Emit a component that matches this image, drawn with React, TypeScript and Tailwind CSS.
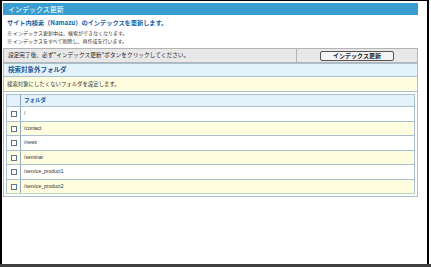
const folders = ['/', '/contact', '/news', '/seminar', '/service_product1', '/service_product2'];

export default function App() {
  return (
    <div className="w-[431px] h-[268px] bg-white flex flex-col font-['Noto_Sans_CJK_JP',sans-serif] text-[#333]">
      <div className="w-[429px] flex-1 border-l-2 border-t border-r-2 border-black pl-px pt-[2px]">
        <div className="w-[415px]">
          {/* title bar */}
          <div className="h-[12px] bg-[#3a9dd0] text-white text-[7px] leading-[12px] pl-[5px]">
            インデックス更新
          </div>

          <div className="mt-[4px] pl-[4px] text-[6.2px] leading-[8px] font-bold text-[#0d5fa8]">
            サイト内検索（Namazu）のインデックスを更新します。
          </div>
          <div className="mt-[2px] pl-[4px] text-[5px] leading-[8px]">
            <div>※ インデックス更新中は、検索ができなくなります。</div>
            <div>※ インデックスをすべて削除し、再作成を行います。</div>
          </div>

          {/* action bar */}
          <div className="mt-[3px] h-[15px] flex border border-[#b4b4b4] bg-[#e8e8e8]">
            <div className="w-[293px] border-r border-[#b4b4b4] flex items-center pl-[4px] text-[5.7px] text-[#222]">
              設定完了後、必ず”インデックス更新”ボタンをクリックしてください。
            </div>
            <div className="flex-1 flex items-center justify-center">
              <button className="w-[74px] h-[10px] border border-[#555] rounded-[2px] bg-[#f4f4f4] text-[6px] leading-[8px] font-bold text-[#222]">
                インデックス更新
              </button>
            </div>
          </div>

          {/* excluded folders */}
          <div className="border border-[#a9c0cf]">
            <div className="h-[13px] bg-[#e4f2fb] border-b border-[#a9c0cf] flex items-center pl-[4px] text-[6.5px] font-bold text-[#1a5a9a]">
              検索対象外フォルダ
            </div>
            <div className="h-[15px] bg-[#fffde0] border-b border-[#a9c0cf] flex items-center pl-[3px] text-[5.4px]">
              検索対象にしたくないフォルダを設定します。
            </div>
            <div className="p-[2px]">
              <div className="border border-[#a9c0cf] border-b-[#b8d8b8]">
                <div className="h-[11px] flex bg-[#e4f2fb]">
                  <div className="w-[14px] border-r border-[#8fa8b8]" />
                  <div className="flex items-center pl-[3px] text-[5.5px] font-bold text-[#1a5a9a]">フォルダ</div>
                </div>
                {folders.map((f, i) => (
                  <div
                    key={f}
                    className={`${i % 2 === 0 ? 'h-[15px] bg-white' : 'h-[14px] bg-[#fffde0]'} flex border-t border-[#a9c0cf]`}
                  >
                    <div className="w-[14px] border-r border-[#8fa8b8] flex items-center justify-center">
                      <div className="w-[6px] h-[6px] border border-[#5a7690] bg-white" />
                    </div>
                    <div className="flex items-center pl-[3px] text-[5px] font-['Liberation_Sans','Noto_Sans_CJK_JP',sans-serif]">
                      {f}
                    </div>
                  </div>
                ))}
              </div>
            </div>
          </div>
        </div>
      </div>
      <div className="h-[3px] bg-[#404040] mb-px" />
    </div>
  );
}
